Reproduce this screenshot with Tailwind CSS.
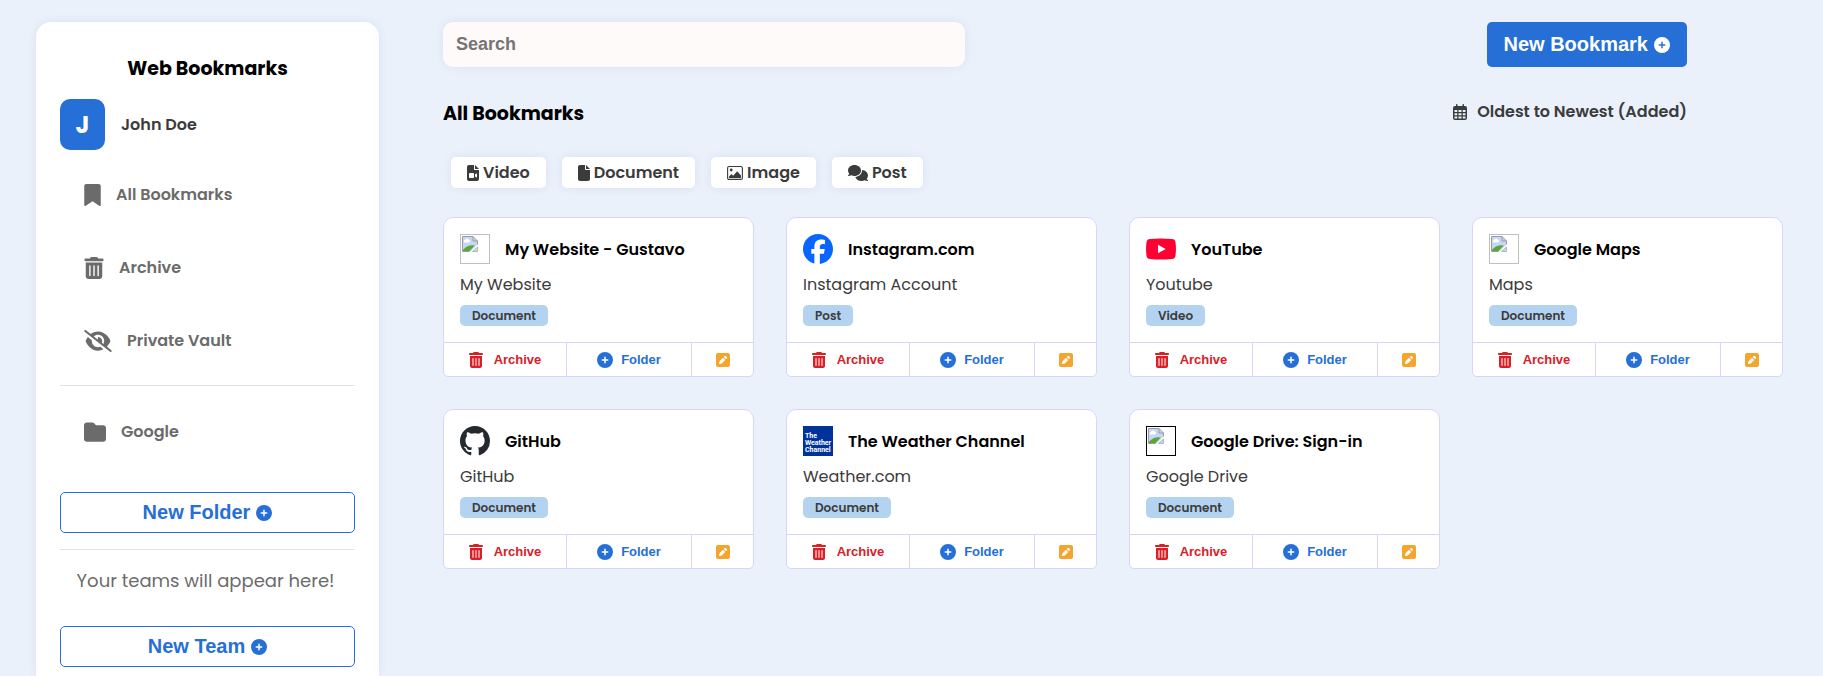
<!DOCTYPE html>
<html lang="en">
<head>
<meta charset="utf-8">
<meta name="viewport" content="width=device-width, initial-scale=1">
<title>Web Bookmarks</title>
<script src="https://cdn.jsdelivr.net/npm/@tailwindcss/browser@4"></script>
</head>
<body class="bg-[#eaf1fb] font-['Poppins','Inter',sans-serif] text-[#3b3b3b]">
<svg class="hidden" aria-hidden="true">
  <symbol id="plus" viewBox="0 0 512 512"><path d="M256 512A256 256 0 1 0 256 0a256 256 0 1 0 0 512zM232 344V280H168c-13.300 0-24-10.700-24-24s10.700-24 24-24h64V168c0-13.300 10.700-24 24-24s24 10.700 24 24v64h64c13.300 0 24 10.700 24 24s-10.700 24-24 24H280v64c0 13.300-10.700 24-24 24s-24-10.700-24-24z"/></symbol>
  <symbol id="bookmark" viewBox="0 0 384 512"><path d="M0 48V487.700C0 501.100 10.900 512 24.300 512c5 0 9.900-1.500 14-4.400L192 400 345.700 507.600c4.100 2.900 9 4.400 14 4.400c13.400 0 24.300-10.900 24.300-24.300V48c0-26.500-21.500-48-48-48H48C21.500 0 0 21.500 0 48z"/></symbol>
  <symbol id="trash" viewBox="0 0 448 512"><path d="M135.200 17.700C140.600 6.800 151.700 0 163.800 0H284.200c12.100 0 23.200 6.800 28.600 17.700L320 32h96c17.700 0 32 14.300 32 32s-14.300 32-32 32H32C14.300 96 0 81.700 0 64S14.300 32 32 32h96l7.200-14.300zM32 128H416V448c0 35.300-28.700 64-64 64H96c-35.300 0-64-28.700-64-64V128zm96 64c-8.800 0-16 7.200-16 16V432c0 8.800 7.200 16 16 16s16-7.200 16-16V208c0-8.800-7.200-16-16-16zm96 0c-8.800 0-16 7.200-16 16V432c0 8.800 7.200 16 16 16s16-7.200 16-16V208c0-8.800-7.200-16-16-16zm96 0c-8.800 0-16 7.200-16 16V432c0 8.800 7.200 16 16 16s16-7.200 16-16V208c0-8.800-7.200-16-16-16z"/></symbol>
  <symbol id="eye-slash" viewBox="0 0 640 512"><path d="M38.800 5.100C28.400-3.100 13.300-1.200 5.100 9.200S-1.200 34.700 9.200 42.900l592 464c10.400 8.200 25.500 6.300 33.700-4.100s6.300-25.500-4.100-33.700L525.600 386.700c39.600-40.600 66.400-86.100 79.900-118.400c3.300-7.900 3.300-16.700 0-24.600c-14.900-35.700-46.200-87.700-93-131.100C465.500 68.800 400.800 32 320 32c-68.200 0-125 26.300-169.300 60.800L38.800 5.100zM223.100 149.500C248.600 126.200 282.700 112 320 112c79.500 0 144 64.500 144 144c0 24.900-6.300 48.300-17.400 68.700L408 294.500c8.400-19.300 10.600-41.400 4.800-63.300c-11.100-41.500-47.800-69.400-88.600-71.100c-5.800-.2-9.200 6.100-7.400 11.700c2.100 6.400 3.300 13.200 3.300 20.300c0 10.200-2.400 19.800-6.600 28.300l-90.300-70.800zM373 389.900c-16.400 6.500-34.300 10.100-53 10.100c-79.500 0-144-64.500-144-144c0-6.900 .5-13.600 1.400-20.200L83.100 161.500C60.300 191.200 44 220.800 34.500 243.700c-3.300 7.900-3.300 16.700 0 24.600c14.900 35.700 46.200 87.700 93 131.100C174.500 443.200 239.200 480 320 480c47.800 0 89.900-12.900 126.200-32.500L373 389.900z"/></symbol>
  <symbol id="folder" viewBox="0 0 512 512"><path d="M64 480H448c35.300 0 64-28.700 64-64V160c0-35.300-28.700-64-64-64H288c-10.100 0-19.600-4.700-25.600-12.800L243.200 57.600C231.100 41.500 212.100 32 192 32H64C28.700 32 0 60.700 0 96V416c0 35.300 28.700 64 64 64z"/></symbol>
  <symbol id="file" viewBox="0 0 384 512"><path d="M0 64C0 28.700 28.700 0 64 0H224V128c0 17.700 14.300 32 32 32H384V448c0 35.300-28.700 64-64 64H64c-35.300 0-64-28.700-64-64V64zm384 64H256V0L384 128z"/></symbol>
  <symbol id="file-video" viewBox="0 0 384 512"><path fill-rule="evenodd" d="M0 64C0 28.700 28.700 0 64 0H224V128c0 17.700 14.300 32 32 32H384V448c0 35.300-28.700 64-64 64H64c-35.300 0-64-28.700-64-64V64zm384 64H256V0L384 128zM64 288c0-17.700 14.300-32 32-32h96c17.700 0 32 14.300 32 32v96c0 17.700-14.300 32-32 32H96c-17.700 0-32-14.300-32-32V288zM300.900 397.900L256 368V304l44.900-29.900c2-1.300 4.400-2.100 6.800-2.100c6.800 0 12.300 5.500 12.300 12.300V387.700c0 6.800-5.500 12.300-12.300 12.300c-2.400 0-4.800-.7-6.800-2.100z"/></symbol>
  <symbol id="image" viewBox="0 0 16 16"><rect x=".6" y="1.500" width="14.800" height="13" rx="1.500" fill="none" stroke="currentColor" stroke-width="1.100"/><circle cx="4.200" cy="5" r="1.400"/><path d="M2 13.200V11.500L4.500 9 6.200 10.700 10.200 6.200 14 10.500V13.200z"/></symbol>
  <symbol id="comments" viewBox="0 0 640 512"><path d="M208 352c114.900 0 208-78.800 208-176S322.900 0 208 0S0 78.800 0 176c0 38.600 14.700 74.300 39.600 103.400c-3.500 9.400-8.700 17.700-14.200 24.700c-4.800 6.200-9.700 11-13.300 14.300c-1.800 1.600-3.300 2.900-4.300 3.700c-.5 .4-.9 .7-1.100 .8l-.2 .2C1 327.200-1.400 334.400 .8 340.900S9.100 352 16 352c21.800 0 43.800-5.600 62.100-12.500c9.200-3.500 17.800-7.400 25.300-11.400C134.100 343.300 169.800 352 208 352zM448 176c0 112.300-99.100 196.900-216.500 207C255.800 457.400 336.400 512 432 512c38.200 0 73.900-8.700 104.700-23.900c7.500 4 16 7.900 25.200 11.400c18.300 6.900 40.300 12.500 62.100 12.500c6.900 0 13.100-4.500 15.200-11.100c2.100-6.600-.2-13.800-5.800-17.900l-.2-.2c-.2-.2-.6-.4-1.100-.8c-1-.8-2.500-2-4.300-3.700c-3.600-3.300-8.500-8.100-13.300-14.300c-5.500-7-10.700-15.400-14.200-24.700c24.900-29 39.600-64.700 39.600-103.400c0-92.800-84.900-168.900-192.600-175.500c.4 5.100 .6 10.300 .6 15.500z"/></symbol>
  <symbol id="calendar" viewBox="0 0 448 512"><path fill-rule="evenodd" d="M120 0a24 24 0 0 1 24 24V64H304V24a24 24 0 0 1 48 0V64h32a64 64 0 0 1 64 64V448a64 64 0 0 1-64 64H64a64 64 0 0 1-64-64V128A64 64 0 0 1 64 64H96V24a24 24 0 0 1 24-24zM48 192V256H136V192zM176 192V256H272V192zM312 192V256H400V192zM48 296V360H136V296zM176 296V360H272V296zM312 296V360H400V296zM48 400V464H136V400zM176 400V464H272V400zM312 400V464H400V400z"/></symbol>
  <symbol id="edit" viewBox="0 0 448 512"><path d="M64 32C28.700 32 0 60.700 0 96V416c0 35.300 28.700 64 64 64H384c35.300 0 64-28.700 64-64V96c0-35.300-28.700-64-64-64H64zM325.800 139.700l14.400 14.400c15.600 15.600 15.600 40.900 0 56.600l-21.400 21.400-71-71 21.400-21.400c15.600-15.600 40.900-15.600 56.600 0zM119.900 289L225.100 183.800l71 71L190.900 359.900c-4.100 4.100-9.200 7-14.900 8.400l-60.100 15c-5.500 1.400-11.200-.2-15.200-4.200s-5.600-9.700-4.200-15.200l15-60.100c1.400-5.600 4.300-10.800 8.400-14.900z"/></symbol>
  <symbol id="missing" viewBox="0 0 16 16"><path d="M.5 .5H11L15.500 5V8.500L8.500 15.500H.5z" fill="#c5d6f6"/><path d="M2.200 6.400a1.500 1.500 0 0 1 1-2.600 2 2 0 0 1 3.700 0 1.400 1.400 0 0 1 .5 2.600z" fill="#fff"/><path d="M1 15V14C3 11.500 5.500 10 8 9.500Q10 8.800 12.800 9.500L7.500 15z" fill="#56a935"/><path d="M7.500 15.500H.5V.5H11L15.500 5V8.500M11 .5V5h4.500" fill="none" stroke="#9c9c9c"/><path d="M10.500 15.500h5V11z" fill="#c5d6f6" stroke="#a8a8a8" stroke-width=".8"/></symbol>
</svg>

<div class="flex min-h-screen items-stretch gap-16 pt-[22px] pr-10 pl-9">
  <aside class="flex w-[343px] shrink-0 flex-col rounded-t-[15px] bg-white px-6 pt-[33px] pb-[9px] shadow-[0_0_10px_rgba(40,50,130,0.08)]">
    <h1 class="text-center text-[19px] leading-7 font-bold text-black">Web Bookmarks</h1>
    <div class="mt-4 flex items-center gap-4">
      <div class="flex h-[51px] w-[45px] items-center justify-center rounded-[10px] bg-[#266fd6] text-2xl font-bold text-white">J</div>
      <span class="text-base font-semibold">John Doe</span>
    </div>
    <nav class="mt-2 text-base font-semibold text-[#6b6b6b]">
      <a href="#" class="flex h-[73px] items-center gap-[15px] pl-6"><svg class="h-[22px] w-[17px]" fill="currentColor"><use href="#bookmark"/></svg>All Bookmarks</a>
      <a href="#" class="flex h-[73px] items-center gap-[15px] pl-6"><svg class="h-[22px] w-5" fill="currentColor"><use href="#trash"/></svg>Archive</a>
      <a href="#" class="flex h-[73px] items-center gap-[15px] pl-6"><svg class="h-[22px] w-7" fill="currentColor"><use href="#eye-slash"/></svg>Private Vault</a>
      <hr class="mt-2 mb-[9px] border-[#e2e4e4]">
      <a href="#" class="flex h-[73px] items-center gap-[15px] pl-6"><svg class="h-[22px] w-[22px]" fill="currentColor"><use href="#folder"/></svg>Google</a>
    </nav>
    <button class="mt-6 flex h-[41px] shrink-0 items-center justify-center gap-[6px] rounded-[5px] border border-[#266fd6] font-['Liberation_Sans',sans-serif] text-xl font-bold text-[#266fd6]"><span class="pb-[2px]">New Folder</span><svg class="size-4" fill="currentColor"><use href="#plus"/></svg></button>
    <hr class="mt-4 border-[#e2e4e4]">
    <p class="mt-[17px] pr-1 text-center text-lg leading-7 text-[#6b6b6b]">Your teams will appear here!</p>
    <button class="mt-[31px] flex h-[41px] shrink-0 items-center justify-center gap-[6px] rounded-[5px] border border-[#266fd6] font-['Liberation_Sans',sans-serif] text-xl font-bold text-[#266fd6]"><span class="pb-[2px]">New Team</span><svg class="size-4" fill="currentColor"><use href="#plus"/></svg></button>
  </aside>

  <main class="min-w-0 flex-1">
    <div class="mr-24 flex items-center justify-between">
      <input type="search" aria-label="Search" placeholder="Search" class="h-[45px] w-[42%] rounded-[10px] bg-[#fffafa] px-[13px] font-['Liberation_Sans',sans-serif] text-lg font-bold shadow-[0_0_10px_rgba(40,50,130,0.08)] placeholder:text-[#757575]">
      <button class="flex h-[45px] items-center gap-[6px] rounded-[5px] bg-[#266fd6] px-[17px] font-['Liberation_Sans',sans-serif] text-xl font-bold text-white"><span class="pb-[2px]">New Bookmark</span><svg class="size-4" fill="currentColor"><use href="#plus"/></svg></button>
    </div>
    <div class="mt-[33px] mr-24 flex items-start justify-between">
      <h2 class="text-[19px] leading-7 font-bold text-black">All Bookmarks</h2>
      <button class="flex items-center gap-[10px] text-base leading-6 font-semibold"><svg class="h-4 w-[14px]" fill="currentColor"><use href="#calendar"/></svg>Oldest to Newest (Added)</button>
    </div>
    <div class="mt-[29px] ml-2 flex gap-4 text-base font-semibold">
      <button class="flex h-[31px] items-center gap-1 rounded-[5px] bg-white px-4 shadow-[0_0_10px_rgba(40,50,130,0.08)]"><svg class="h-4 w-3" fill="currentColor"><use href="#file-video"/></svg>Video</button>
      <button class="flex h-[31px] items-center gap-1 rounded-[5px] bg-white px-4 shadow-[0_0_10px_rgba(40,50,130,0.08)]"><svg class="h-4 w-3" fill="currentColor"><use href="#file"/></svg>Document</button>
      <button class="flex h-[31px] items-center gap-1 rounded-[5px] bg-white px-4 shadow-[0_0_10px_rgba(40,50,130,0.08)]"><svg class="size-4" fill="currentColor"><use href="#image"/></svg>Image</button>
      <button class="flex h-[31px] items-center gap-1 rounded-[5px] bg-white px-4 shadow-[0_0_10px_rgba(40,50,130,0.08)]"><svg class="h-4 w-5" fill="currentColor"><use href="#comments"/></svg>Post</button>
    </div>

    <div class="mt-[29px] grid grid-cols-4 gap-8">
      <article class="rounded-t-[10px] rounded-b-[5px] border border-[#d5d6fa] bg-white">
        <div class="p-4">
          <div class="flex items-center gap-[15px]"><div class="size-[30px] border border-[#c0c0c0] p-px"><svg class="size-4"><use href="#missing"/></svg></div><h3 class="pt-[2px] text-base leading-6 font-semibold text-black">My Website - Gustavo</h3></div>
          <p class="mt-[9px] text-base leading-6">My Website</p>
          <div class="mt-2 flex"><span class="rounded-[5px] bg-[#b4d3f1] px-3 text-xs leading-[21px] font-semibold">Document</span></div>
        </div>
        <div class="grid h-[34px] grid-cols-[123fr_125fr_61fr] divide-x divide-[#d5d6fa] border-t border-[#d5d6fa] font-['Liberation_Sans',sans-serif] text-[13px] font-bold">
          <button class="flex items-center justify-center gap-[11px] text-[#d92027]"><svg class="h-4 w-[14px]" fill="currentColor"><use href="#trash"/></svg>Archive</button>
          <button class="flex items-center justify-center gap-2 text-[#266fd6]"><svg class="size-4" fill="currentColor"><use href="#plus"/></svg>Folder</button>
          <button aria-label="Edit" class="flex items-center justify-center text-[#f3a52e]"><svg class="h-4 w-[14px]" fill="currentColor"><use href="#edit"/></svg></button>
        </div>
      </article>

      <article class="rounded-t-[10px] rounded-b-[5px] border border-[#d5d6fa] bg-white">
        <div class="p-4">
          <div class="flex items-center gap-[15px]"><svg class="size-[30px]" viewBox="0 0 24 24" fill="#0866ff"><path d="M9.101 23.691v-7.980H6.627v-3.667h2.474v-1.580c0-4.085 1.848-5.978 5.858-5.978.401 0 .955.042 1.468.103a8.680 8.680 0 0 1 1.141.195v3.325a8.623 8.623 0 0 0-.653-.036 26.805 26.805 0 0 0-.733-.009c-.707 0-1.259.096-1.675.309a1.686 1.686 0 0 0-.679.622c-.258.420-.374.995-.374 1.752v1.297h3.919l-.386 2.103-.287 1.564h-3.246v8.245C19.396 23.238 24 18.179 24 12.044c0-6.627-5.373-12-12-12s-12 5.373-12 12c0 5.628 3.874 10.350 9.101 11.647Z"/></svg><h3 class="pt-[2px] text-base leading-6 font-semibold text-black">Instagram.com</h3></div>
          <p class="mt-[9px] text-base leading-6">Instagram Account</p>
          <div class="mt-2 flex"><span class="rounded-[5px] bg-[#b4d3f1] px-3 text-xs leading-[21px] font-semibold">Post</span></div>
        </div>
        <div class="grid h-[34px] grid-cols-[123fr_125fr_61fr] divide-x divide-[#d5d6fa] border-t border-[#d5d6fa] font-['Liberation_Sans',sans-serif] text-[13px] font-bold">
          <button class="flex items-center justify-center gap-[11px] text-[#d92027]"><svg class="h-4 w-[14px]" fill="currentColor"><use href="#trash"/></svg>Archive</button>
          <button class="flex items-center justify-center gap-2 text-[#266fd6]"><svg class="size-4" fill="currentColor"><use href="#plus"/></svg>Folder</button>
          <button aria-label="Edit" class="flex items-center justify-center text-[#f3a52e]"><svg class="h-4 w-[14px]" fill="currentColor"><use href="#edit"/></svg></button>
        </div>
      </article>

      <article class="rounded-t-[10px] rounded-b-[5px] border border-[#d5d6fa] bg-white">
        <div class="p-4">
          <div class="flex items-center gap-[15px]"><svg class="size-[30px]" viewBox="0 0 30 30"><path d="M4 5Q15 4 26 5Q29.200 5.300 29.500 8.500Q30.400 15 29.500 21.500Q29.200 24.700 26 25Q15 26 4 25Q.8 24.700 .5 21.500Q-.4 15 .5 8.500Q.8 5.300 4 5Z" fill="#ff0033"/><path d="M12 10.700L19.700 15 12 19.300Z" fill="#fff"/></svg><h3 class="pt-[2px] text-base leading-6 font-semibold text-black">YouTube</h3></div>
          <p class="mt-[9px] text-base leading-6">Youtube</p>
          <div class="mt-2 flex"><span class="rounded-[5px] bg-[#b4d3f1] px-3 text-xs leading-[21px] font-semibold">Video</span></div>
        </div>
        <div class="grid h-[34px] grid-cols-[123fr_125fr_61fr] divide-x divide-[#d5d6fa] border-t border-[#d5d6fa] font-['Liberation_Sans',sans-serif] text-[13px] font-bold">
          <button class="flex items-center justify-center gap-[11px] text-[#d92027]"><svg class="h-4 w-[14px]" fill="currentColor"><use href="#trash"/></svg>Archive</button>
          <button class="flex items-center justify-center gap-2 text-[#266fd6]"><svg class="size-4" fill="currentColor"><use href="#plus"/></svg>Folder</button>
          <button aria-label="Edit" class="flex items-center justify-center text-[#f3a52e]"><svg class="h-4 w-[14px]" fill="currentColor"><use href="#edit"/></svg></button>
        </div>
      </article>

      <article class="rounded-t-[10px] rounded-b-[5px] border border-[#d5d6fa] bg-white">
        <div class="p-4">
          <div class="flex items-center gap-[15px]"><div class="size-[30px] border border-[#c0c0c0] p-px"><svg class="size-4"><use href="#missing"/></svg></div><h3 class="pt-[2px] text-base leading-6 font-semibold text-black">Google Maps</h3></div>
          <p class="mt-[9px] text-base leading-6">Maps</p>
          <div class="mt-2 flex"><span class="rounded-[5px] bg-[#b4d3f1] px-3 text-xs leading-[21px] font-semibold">Document</span></div>
        </div>
        <div class="grid h-[34px] grid-cols-[123fr_125fr_61fr] divide-x divide-[#d5d6fa] border-t border-[#d5d6fa] font-['Liberation_Sans',sans-serif] text-[13px] font-bold">
          <button class="flex items-center justify-center gap-[11px] text-[#d92027]"><svg class="h-4 w-[14px]" fill="currentColor"><use href="#trash"/></svg>Archive</button>
          <button class="flex items-center justify-center gap-2 text-[#266fd6]"><svg class="size-4" fill="currentColor"><use href="#plus"/></svg>Folder</button>
          <button aria-label="Edit" class="flex items-center justify-center text-[#f3a52e]"><svg class="h-4 w-[14px]" fill="currentColor"><use href="#edit"/></svg></button>
        </div>
      </article>

      <article class="rounded-t-[10px] rounded-b-[5px] border border-[#d5d6fa] bg-white">
        <div class="p-4">
          <div class="flex items-center gap-[15px]"><svg class="size-[30px]" viewBox="0 0 16 16" fill="#24292e"><path d="M8 0C3.580 0 0 3.580 0 8c0 3.540 2.290 6.530 5.470 7.590.4.070.55-.17.55-.38 0-.19-.01-.82-.01-1.490-2.010.37-2.530-.49-2.690-.94-.09-.23-.48-.94-.82-1.130-.28-.15-.68-.52-.01-.53.63-.01 1.080.58 1.230.82.72 1.210 1.870.87 2.330.66.07-.52.28-.87.51-1.070-1.780-.2-3.640-.89-3.640-3.950 0-.87.31-1.590.82-2.150-.08-.2-.36-1.020.08-2.120 0 0 .67-.21 2.200.82.64-.18 1.320-.27 2-.27s1.360.09 2 .27c1.530-1.040 2.200-.82 2.200-.82.44 1.100.16 1.920.08 2.120.51.56.82 1.270.82 2.150 0 3.070-1.870 3.750-3.650 3.950.29.25.54.73.54 1.480 0 1.070-.01 1.930-.01 2.200 0 .21.15.46.55.38A8.010 8.010 0 0 0 16 8c0-4.420-3.580-8-8-8z"/></svg><h3 class="pt-[2px] text-base leading-6 font-semibold text-black">GitHub</h3></div>
          <p class="mt-[9px] text-base leading-6">GitHub</p>
          <div class="mt-2 flex"><span class="rounded-[5px] bg-[#b4d3f1] px-3 text-xs leading-[21px] font-semibold">Document</span></div>
        </div>
        <div class="grid h-[34px] grid-cols-[123fr_125fr_61fr] divide-x divide-[#d5d6fa] border-t border-[#d5d6fa] font-['Liberation_Sans',sans-serif] text-[13px] font-bold">
          <button class="flex items-center justify-center gap-[11px] text-[#d92027]"><svg class="h-4 w-[14px]" fill="currentColor"><use href="#trash"/></svg>Archive</button>
          <button class="flex items-center justify-center gap-2 text-[#266fd6]"><svg class="size-4" fill="currentColor"><use href="#plus"/></svg>Folder</button>
          <button aria-label="Edit" class="flex items-center justify-center text-[#f3a52e]"><svg class="h-4 w-[14px]" fill="currentColor"><use href="#edit"/></svg></button>
        </div>
      </article>

      <article class="rounded-t-[10px] rounded-b-[5px] border border-[#d5d6fa] bg-white">
        <div class="p-4">
          <div class="flex items-center gap-[15px]"><div class="flex size-[30px] flex-col justify-end bg-[#003399] pb-[2px] pl-[2px] font-['Roboto',sans-serif] text-[7px] leading-[7px] font-bold text-white"><span>The</span><span>Weather</span><span>Channel</span></div><h3 class="pt-[2px] text-base leading-6 font-semibold text-black">The Weather Channel</h3></div>
          <p class="mt-[9px] text-base leading-6">Weather.com</p>
          <div class="mt-2 flex"><span class="rounded-[5px] bg-[#b4d3f1] px-3 text-xs leading-[21px] font-semibold">Document</span></div>
        </div>
        <div class="grid h-[34px] grid-cols-[123fr_125fr_61fr] divide-x divide-[#d5d6fa] border-t border-[#d5d6fa] font-['Liberation_Sans',sans-serif] text-[13px] font-bold">
          <button class="flex items-center justify-center gap-[11px] text-[#d92027]"><svg class="h-4 w-[14px]" fill="currentColor"><use href="#trash"/></svg>Archive</button>
          <button class="flex items-center justify-center gap-2 text-[#266fd6]"><svg class="size-4" fill="currentColor"><use href="#plus"/></svg>Folder</button>
          <button aria-label="Edit" class="flex items-center justify-center text-[#f3a52e]"><svg class="h-4 w-[14px]" fill="currentColor"><use href="#edit"/></svg></button>
        </div>
      </article>

      <article class="rounded-t-[10px] rounded-b-[5px] border border-[#d5d6fa] bg-white">
        <div class="p-4">
          <div class="flex items-center gap-[15px]"><div class="size-[30px] border border-black p-px"><svg class="size-4"><use href="#missing"/></svg></div><h3 class="pt-[2px] text-base leading-6 font-semibold text-black">Google Drive: Sign-in</h3></div>
          <p class="mt-[9px] text-base leading-6">Google Drive</p>
          <div class="mt-2 flex"><span class="rounded-[5px] bg-[#b4d3f1] px-3 text-xs leading-[21px] font-semibold">Document</span></div>
        </div>
        <div class="grid h-[34px] grid-cols-[123fr_125fr_61fr] divide-x divide-[#d5d6fa] border-t border-[#d5d6fa] font-['Liberation_Sans',sans-serif] text-[13px] font-bold">
          <button class="flex items-center justify-center gap-[11px] text-[#d92027]"><svg class="h-4 w-[14px]" fill="currentColor"><use href="#trash"/></svg>Archive</button>
          <button class="flex items-center justify-center gap-2 text-[#266fd6]"><svg class="size-4" fill="currentColor"><use href="#plus"/></svg>Folder</button>
          <button aria-label="Edit" class="flex items-center justify-center text-[#f3a52e]"><svg class="h-4 w-[14px]" fill="currentColor"><use href="#edit"/></svg></button>
        </div>
      </article>
    </div>
  </main>
</div>
</body>
</html>
